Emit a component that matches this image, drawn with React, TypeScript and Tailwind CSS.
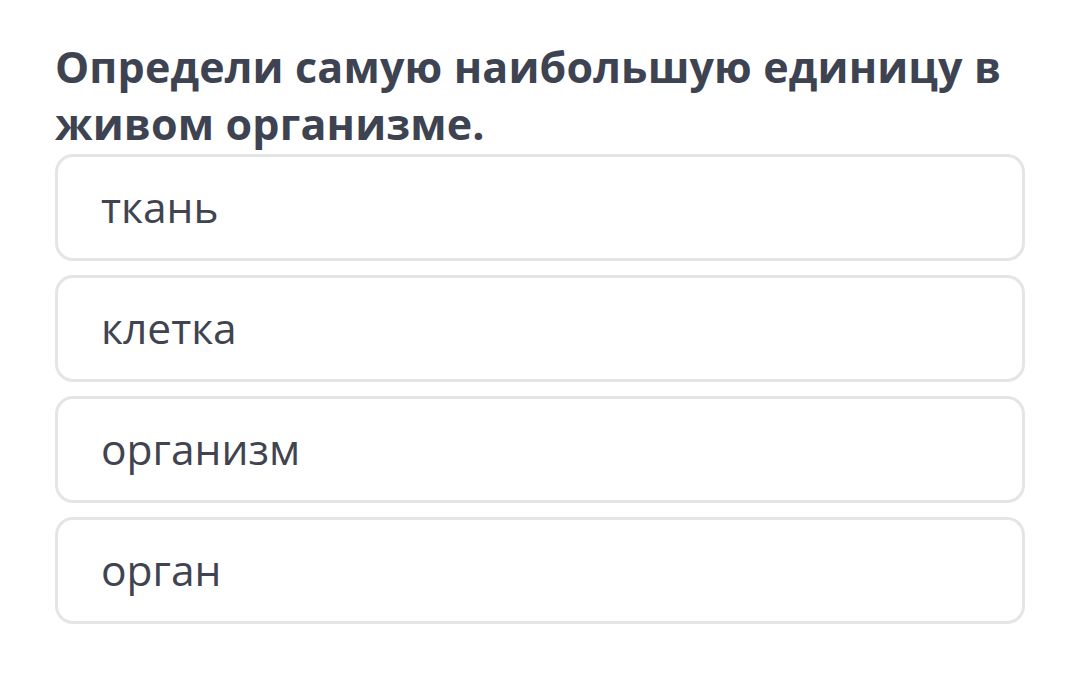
const options = ['ткань', 'клетка', 'организм', 'орган'];

export default function App() {
    return (
        <div className="min-h-[678px] w-[1080px] bg-white px-[55px] pt-[38px]" style={{ fontFamily: '"Open Sans", sans-serif' }}>
            <h1 className="text-[43px] leading-[57px] font-bold text-[#3d4350] tracking-[0.15px]">
                Определи самую наибольшую единицу в живом организме.
            </h1>
            <div className="mt-[2px] flex w-[970px] flex-col gap-[14px]">
                {options.map(o => (
                    <div key={o} className="flex h-[107px] items-center rounded-[18px] border-[3px] border-[#e3e5e6] pl-[43px] pb-[2px]">
                        <span className="text-[42.5px] text-[#3f4450]">{o}</span>
                    </div>
                ))}
            </div>
        </div>
    );
}
